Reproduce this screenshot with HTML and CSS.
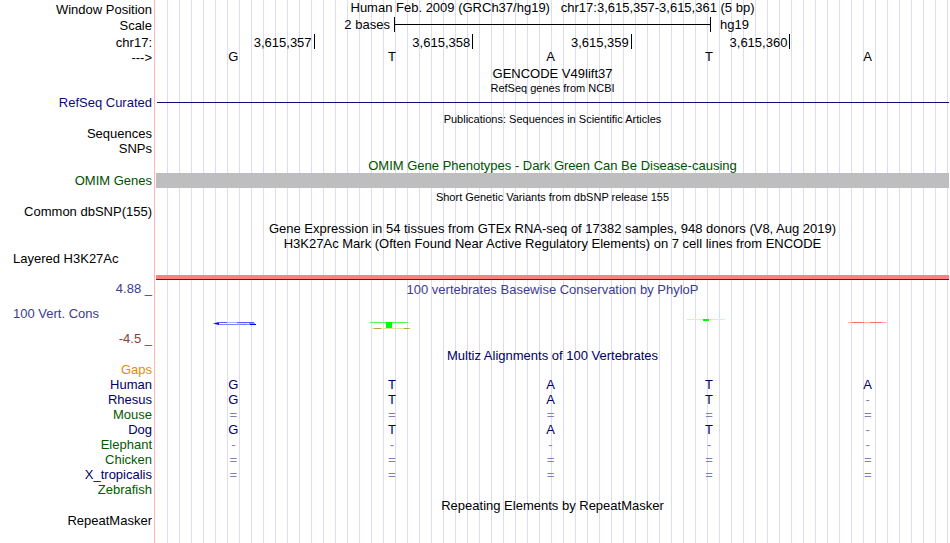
FILE: index.html
```
<!DOCTYPE html>
<html lang="en">
<head>
  <meta charset="UTF-8">
  <title>chr17:3,615,357-3,615,361</title>
  <link rel="stylesheet" href="styles.css">
</head>
<body>
  <div class="browser">

    <!-- position, scale and ruler -->
    <div class="row ruler-row">
      <div class="label">Window Position</div>
      <div class="title">Human Feb. 2009 (GRCh37/hg19) &nbsp; chr17:3,615,357-3,615,361 (5 bp)</div>
    </div>
    <div class="row ruler-row">
      <div class="label">Scale</div>
      <div class="scale">
        <span class="scale-size">2 bases</span>
        <span class="scale-bar"></span>
        <span class="scale-db">hg19</span>
      </div>
    </div>
    <div class="row ruler-row">
      <div class="label">chr17:</div>
      <div class="ticks">
        <span>3,615,357</span>
        <span>3,615,358</span>
        <span>3,615,359</span>
        <span>3,615,360</span>
      </div>
    </div>
    <div class="row">
      <div class="label">---&gt;</div>
      <div class="bases">
        <span>G</span><span>T</span><span>A</span><span>T</span><span>A</span>
      </div>
    </div>

    <!-- genes -->
    <div class="row title-row">
      <div class="label"></div>
      <div class="title">GENCODE V49lift37</div>
    </div>
    <div class="row subtitle-row">
      <div class="label"></div>
      <div class="title small">RefSeq genes from NCBI</div>
    </div>
    <div class="row">
      <div class="label refseq">RefSeq Curated</div>
      <div class="intron"></div>
    </div>

    <!-- publications -->
    <div class="row title-row">
      <div class="label"></div>
      <div class="title small">Publications: Sequences in Scientific Articles</div>
    </div>
    <div class="row">
      <div class="label">Sequences</div>
    </div>
    <div class="row title-row">
      <div class="label">SNPs</div>
    </div>

    <!-- omim -->
    <div class="row title-row omim">
      <div class="label"></div>
      <div class="title">OMIM Gene Phenotypes - Dark Green Can Be Disease-causing</div>
    </div>
    <div class="row omim">
      <div class="label">OMIM Genes</div>
      <div class="omim-item"></div>
    </div>

    <!-- variants -->
    <div class="row title-row">
      <div class="label"></div>
      <div class="title small">Short Genetic Variants from dbSNP release 155</div>
    </div>
    <div class="row snp-row">
      <div class="label">Common dbSNP(155)</div>
    </div>

    <!-- expression and regulation -->
    <div class="row">
      <div class="label"></div>
      <div class="title">Gene Expression in 54 tissues from GTEx RNA-seq of 17382 samples, 948 donors (V8, Aug 2019)</div>
    </div>
    <div class="row">
      <div class="label"></div>
      <div class="title">H3K27Ac Mark (Often Found Near Active Regulatory Elements) on 7 cell lines from ENCODE</div>
    </div>
    <div class="row histone-row">
      <div class="label left">Layered H3K27Ac</div>
      <div class="histone"></div>
    </div>

    <!-- conservation -->
    <div class="row cons-row">
      <div class="label cons-label">
        <span>4.88 _</span>
        <span class="left">100 Vert. Cons</span>
        <span class="minimum">-4.5 _</span>
      </div>
      <div class="cons">
        <div class="title">100 vertebrates Basewise Conservation by PhyloP</div>
        <div class="logos">
          <svg width="60" height="20">
            <path d="M10 11.5L16 10L16 13Z" fill="#0000ff"/>
            <path d="M14 10.5H51" stroke="#5c5cff"/>
            <path d="M24 10.5H34" stroke="#b4b4ff"/>
            <path d="M16 12.5H49" stroke="#8080ff"/>
            <path d="M34 11.5H44" stroke="#dcdcff"/>
            <path d="M46 11.5H52" stroke="#8c8cff"/>
            <path d="M47 12.5H53" stroke="#0000ff"/>
          </svg>
          <svg width="60" height="20">
            <path d="M8 10.5H46" stroke="#50ff50"/>
            <rect x="24" y="10" width="6" height="6" fill="#00ff00"/>
            <path d="M10 16.5H49" stroke="#e6e0a8"/>
            <path d="M12 16.5H19M42 16.5H47" stroke="#b4aa32"/>
          </svg>
          <svg width="60" height="20"></svg>
          <svg width="60" height="20">
            <path d="M8 7.5H46" stroke="#ccf7cc"/>
            <rect x="24" y="7" width="6" height="2" fill="#00ff00"/>
          </svg>
          <svg width="60" height="20">
            <path d="M10 10.5H49" stroke="#ffb4b4"/>
            <path d="M14 10.5H26M32 10.5H44" stroke="#ff6e6e"/>
          </svg>
        </div>
      </div>
    </div>

    <table class="multiz">
      <caption>Multiz Alignments of 100 Vertebrates</caption>
      <colgroup><col class="label-col"><col span="5"></colgroup>
      <tr class="gaps"><th scope="row">Gaps</th><td></td><td></td><td></td><td></td><td></td></tr>
      <tr><th scope="row">Human</th><td>G</td><td>T</td><td>A</td><td>T</td><td>A</td></tr>
      <tr><th scope="row">Rhesus</th><td>G</td><td>T</td><td>A</td><td>T</td><td class="dim">-</td></tr>
      <tr class="alt"><th scope="row">Mouse</th><td class="dim">=</td><td class="dim">=</td><td class="dim">=</td><td class="dim">=</td><td class="dim">=</td></tr>
      <tr><th scope="row">Dog</th><td>G</td><td>T</td><td>A</td><td>T</td><td class="dim">-</td></tr>
      <tr class="alt"><th scope="row">Elephant</th><td class="dim">-</td><td class="dim">-</td><td class="dim">-</td><td class="dim">-</td><td class="dim">-</td></tr>
      <tr class="alt"><th scope="row">Chicken</th><td class="dim">=</td><td class="dim">=</td><td class="dim">=</td><td class="dim">=</td><td class="dim">=</td></tr>
      <tr><th scope="row">X_tropicalis</th><td class="dim">=</td><td class="dim">=</td><td class="dim">=</td><td class="dim">=</td><td class="dim">=</td></tr>
      <tr class="alt"><th scope="row">Zebrafish</th><td></td><td></td><td></td><td></td><td></td></tr>
    </table>

    <!-- repeats -->
    <div class="row title-row">
      <div class="label"></div>
      <div class="title">Repeating Elements by RepeatMasker</div>
    </div>
    <div class="row">
      <div class="label">RepeatMasker</div>
    </div>
  </div>
</body>
</html>
```
FILE: styles.css
```
* {
  box-sizing: border-box;
}

body {
  margin: 0;
  background: #fff;
  color: #000;
  font-family: "Liberation Sans", Arial, Helvetica, sans-serif;
  font-size: 13px;
  line-height: 15px;
}

/* red edge of the label column, then a guide line every 12px */
.browser {
  min-height: 100vh;
  padding-right: 1px;
  background:
    linear-gradient(#ffb4b4, #ffb4b4) 154px 0 / 1px 100% no-repeat,
    repeating-linear-gradient(to right, transparent 0, transparent 11px, #dcdcf8 11px, #dcdcf8 12px) 156px 0 no-repeat;
}

.row {
  display: grid;
  grid-template-columns: 156px 1fr;
  min-height: 15px;
}

.label {
  padding-right: 4px;
  text-align: right;
  white-space: nowrap;
}

.left {
  padding-left: 13px;
  text-align: left;
}

.title {
  text-align: center;
  white-space: nowrap;
}

.small {
  font-size: 11px;
}

.title-row {
  grid-template-rows: 16px;
  line-height: 16px;
}

.title-row .title {
  line-height: 18px;
}

.subtitle-row {
  min-height: 14px;
  line-height: 14px;
}

/* ruler */
.ruler-row {
  grid-template-rows: 17px;
  line-height: 17px;
}

.ruler-row .label {
  line-height: 19px;
}

.ruler-row:first-child {
  grid-template-rows: 16px;
  line-height: 16px;
}

.scale {
  display: grid;
  grid-template-columns: 3fr 4fr 3fr;
  align-items: center;
}

.scale-size {
  padding-right: 4px;
  text-align: right;
}

.scale-bar {
  height: 15px;
  border: solid #000;
  border-width: 0 1px;
  background: linear-gradient(#000, #000) 0 50% / 100% 1px no-repeat;
}

.scale-db {
  padding-left: 9px;
}

.ticks,
.bases,
.logos {
  display: grid;
  grid-template-columns: repeat(5, 1fr);
}

.ticks {
  align-items: center;
}

.ticks span {
  height: 15px;
  padding-right: 2px;
  border-right: 1px solid #000;
  line-height: 17px;
  text-align: right;
}

.bases {
  line-height: 13px;
}

.bases span {
  padding-right: 4px;
  text-align: center;
}

/* tracks */
.refseq {
  color: #0c0c78;
}

.intron {
  align-self: center;
  height: 1px;
  margin-left: 1px;
  background: #0c0c78;
}

.omim {
  color: #005000;
}

.omim-item {
  background: #bebebe;
}

.snp-row {
  min-height: 17px;
}

.histone-row {
  min-height: 29px;
}

.histone {
  align-self: end;
  height: 5px;
  border-bottom: 1px solid #3c2838;
  background: #ff8080;
}

/* conservation */
.cons-row {
  min-height: 68px;
  color: #3c3c8c;
}

.cons-label {
  display: flex;
  flex-direction: column;
  justify-content: space-between;
  padding-top: 1px;
  padding-bottom: 2px;
}

.minimum {
  color: #8c3c3c;
}

.cons .title {
  line-height: 20px;
}

.logos {
  justify-items: center;
  padding-top: 12px;
}

.logos svg {
  display: block;
  margin-right: 4px;
}

.multiz {
  width: 100%;
  table-layout: fixed;
  border-collapse: collapse;
  color: #000064;
}

.multiz caption {
  height: 14px;
  padding-left: 156px;
  line-height: 16px;
}

.label-col {
  width: 156px;
}

.multiz th,
.multiz td {
  height: 15px;
  padding: 0 4px 0 0;
  font-weight: normal;
  text-align: center;
}

.multiz th {
  text-align: right;
}

.alt {
  color: #005a00;
}

.gaps {
  color: #e68a0a;
}

.multiz .dim {
  color: #8080b4;
}
```
